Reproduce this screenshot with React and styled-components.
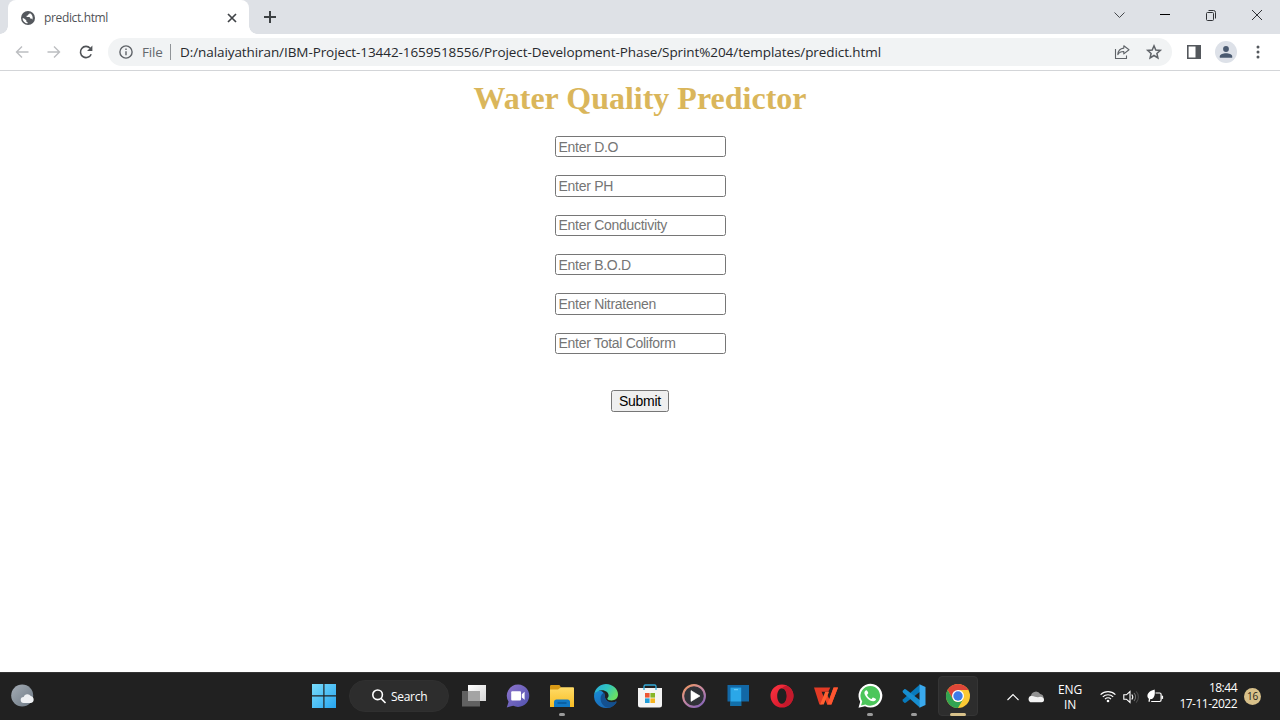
import React from 'react';
import styled, { createGlobalStyle } from 'styled-components';

const Global = createGlobalStyle`
  * { box-sizing: border-box; }
  html, body { margin: 0; padding: 0; }
  body { background: #fff; overflow: hidden; }
  svg { display: block; flex: none; overflow: visible; }
`;

const ui = `'Open Sans', 'Noto Sans', sans-serif`;

const Screen = styled.div`
  width: 1280px;
  height: 720px;
  display: flex;
  flex-direction: column;
  background: #fff;
`;

const TabStrip = styled.header`
  height: 34px;
  flex: none;
  display: flex;
  background: #dee1e6;
  padding-left: 8px;
`;

const Tab = styled.div`
  position: relative;
  width: 241px;
  height: 34px;
  padding: 1px 10px 0 13px;
  display: flex;
  align-items: center;
  background: #fff;
  border-radius: 8px 8px 0 0;
  &::before, &::after {
    content: '';
    position: absolute;
    bottom: 0;
    width: 8px;
    height: 8px;
  }
  &::before { left: -8px; background: radial-gradient(circle at 0 0, transparent 7.5px, #fff 8px); }
  &::after { right: -8px; background: radial-gradient(circle at 100% 0, transparent 7.5px, #fff 8px); }
`;

const TabTitle = styled.span`
  flex: 1;
  margin-left: 9px;
  padding-top: 1px;
  font: 12px/16px ${ui};
  letter-spacing: -0.36px;
  color: #505357;
`;

const NewTab = styled.div`
  width: 42px;
  display: flex;
  align-items: center;
  justify-content: center;
`;

const WindowControls = styled.div`
  margin-left: auto;
  display: flex;
`;

const ControlCell = styled.div`
  width: 46px;
  height: 30px;
  display: flex;
  align-items: center;
  justify-content: center;
`;

const Toolbar = styled.div`
  height: 37px;
  flex: none;
  display: flex;
  align-items: center;
  background: #fff;
  border-bottom: 1px solid #d3d5d8;
  padding: 0 6px 0 6px;
`;

const ToolButton = styled.div`
  width: 32px;
  height: 32px;
  display: flex;
  align-items: center;
  justify-content: center;
`;

const AddressBar = styled.div`
  width: 1064px;
  height: 28px;
  margin: 0 6px;
  padding: 0 2px 0 11px;
  display: flex;
  align-items: center;
  border-radius: 14px;
  background: #f1f3f4;
  font: 13.5px/20px ${ui};
  color: #27292d;
`;

const Scheme = styled.span`
  width: 20px;
  margin-left: 9px;
  letter-spacing: -0.2px;
  color: #64686d;
  white-space: nowrap;
`;

const Divider = styled.span`
  width: 1px;
  height: 16px;
  margin: 0 9px 0 8px;
  background: #909498;
`;

const Url = styled.span`
  flex: 1;
  white-space: nowrap;
  letter-spacing: -0.083px;
`;

const Avatar = styled.div`
  width: 22px;
  height: 22px;
  border-radius: 50%;
  background: #dde1e8;
  display: flex;
  align-items: center;
  justify-content: center;
`;

const Page = styled.main`
  flex: 1;
  display: flex;
  flex-direction: column;
  align-items: center;
`;

const Heading = styled.h1`
  margin: 9px 0 20px;
  font: bold 32px/36px 'Liberation Serif', serif;
  color: #dab65b;
`;

const Form = styled.form`
  display: flex;
  flex-direction: column;
  align-items: center;
  gap: 18px;
`;

const Field = styled.input`
  width: 171px;
  height: 21.33px;
  padding: 1px 3px;
  border: 1px solid #767676;
  border-radius: 2.5px;
  background: #fff;
  font: 14px 'Liberation Sans', sans-serif;
  letter-spacing: -0.28px;
  &::placeholder { color: #757575; }
`;

const Submit = styled.button`
  width: 58px;
  height: 22px;
  margin-top: 18px;
  padding: 0;
  border: 1px solid #767676;
  border-radius: 2.5px;
  background: #efefef;
  color: #000;
  font: 14px/18px 'Liberation Sans', sans-serif;
  letter-spacing: -0.28px;
`;

const Taskbar = styled.footer`
  height: 48px;
  flex: none;
  display: flex;
  background: #212121;
  border-top: 1px solid #343434;
  color: #fff;
  font-family: ${ui};
`;

const Weather = styled.div`
  width: 302px;
  padding: 0 0 1px 11px;
  display: flex;
  align-items: center;
`;

const Slot = styled.div`
  position: relative;
  width: 44px;
  padding-bottom: 1px;
  display: flex;
  align-items: center;
  justify-content: center;
`;

const ActiveSlot = styled(Slot)`
  &::before {
    content: '';
    position: absolute;
    inset: 3px 2px 4px;
    border-radius: 4px;
    background: #2d2d2d;
    border: 1px solid #353535;
  }
  > svg { position: relative; }
`;

const Indicator = styled.span`
  position: absolute;
  bottom: 4px;
  left: 50%;
  width: ${p => (p.$active ? 16 : 6)}px;
  height: 3px;
  transform: translateX(-50%);
  border-radius: 2px;
  background: ${p => (p.$active ? '#d8c18a' : '#9b9b9b')};
`;

const SearchPill = styled.div`
  width: 100px;
  height: 32px;
  margin: 7px 3px 0 3px;
  padding-left: 22px;
  display: flex;
  align-items: center;
  gap: 5px;
  border-radius: 16px;
  background: #2d2d2d;
  border: 1px solid #303030;
  font-size: 12px;
  letter-spacing: -0.3px;
`;

const Tray = styled.div`
  margin-left: auto;
  padding-right: 19px;
  display: flex;
  align-items: center;
`;

const Language = styled.div`
  width: 28px;
  margin: 1px 16px 0 11px;
  text-align: center;
  font-size: 12px;
  line-height: 15px;
  letter-spacing: -0.2px;
`;

const Status = styled.div`
  display: flex;
  align-items: center;
  gap: 7px;
`;

const Clock = styled.div`
  width: 62px;
  margin: 0 7px 2px 11px;
  text-align: right;
  white-space: nowrap;
  font-size: 12px;
  line-height: 16px;
  letter-spacing: -0.5px;
`;

const Badge = styled.div`
  width: 17px;
  height: 17px;
  border-radius: 50%;
  background: #d8c18a;
  color: #2a2618;
  font-size: 10px;
  line-height: 17px;
  text-align: center;
  letter-spacing: -0.3px;
`;

const fields = [
  'Enter D.O',
  'Enter PH',
  'Enter Conductivity',
  'Enter B.O.D',
  'Enter Nitratenen',
  'Enter Total Coliform',
];

const Globe = () => (
  <svg width="14" height="14" viewBox="0 0 14 14">
    <circle cx="7" cy="7" r="7" fill="#54585d" />
    <path d="M8.7 1.9c.1.9-.5 1.2-1.2 1.4-.5.2-.2 1-.8 1.2-.5.2-1.1 0-1.1.5s.2.9-.3 1.1h2.6c.9 0 1.2.6 1.2 1.4h1c.8 0 1.2.8 1.1 1.6a5.5 5.5 0 0 0-2.5-7.2zM1.5 7.2c.2 2.7 2.2 5 5 5.3v-1.4c-.8 0-1.2-.5-1.2-1.1v-.7L2.8 7.2z" fill="#fff" />
  </svg>
);

const Line = ({ w, h, d, color = '#5f6368', sw = 1.5, ...rest }) => (
  <svg width={w} height={h} viewBox={`0 0 ${w} ${h}`} fill="none" stroke={color} strokeWidth={sw} {...rest}>
    <path d={d} />
  </svg>
);

const Reload = () => (
  <svg width="16" height="16" viewBox="0 0 16 16">
    <path d="M13.2 10.2A5.6 5.6 0 1 1 12.2 4.2" fill="none" stroke="#505357" strokeWidth="1.6" />
    <path d="M14.4 1.6v5.3H9.1z" fill="#505357" />
  </svg>
);

const Info = () => (
  <svg width="14" height="14" viewBox="0 0 14 14">
    <circle cx="7" cy="7" r="6.1" fill="none" stroke="#5f6368" strokeWidth="1.4" />
    <path d="M7 6.2v4.1M7 3.4v1.5" stroke="#5f6368" strokeWidth="1.4" />
  </svg>
);

const Share = () => (
  <svg width="16" height="16" viewBox="0 0 16 16" fill="none" stroke="#5f6368" strokeWidth="1.1" strokeLinejoin="round">
    <path d="M1.5 5v9.5h11v-3" />
    <path d="M9.8 1.7 15 5.7 9.8 9.9V7.5C6.7 7.4 5 8.6 3.8 10.6 4.1 6.8 6.4 4.4 9.8 4.1z" />
  </svg>
);

const Star = () => (
  <svg width="16" height="16" viewBox="0 0 16 16">
    <path d="m8 1.8 1.8 4.2 4.5.4-3.4 3 1 4.5L8 11.5l-3.9 2.4 1-4.5-3.4-3 4.5-.4z" fill="none" stroke="#5f6368" strokeWidth="1.5" />
  </svg>
);

const SidePanel = () => (
  <svg width="14" height="14" viewBox="0 0 14 14">
    <path d="M.8 .8h12.4v12.4H.8z" fill="#fff" stroke="#54585d" strokeWidth="1.6" />
    <path d="M8.5 1H13v12H8.5z" fill="#54585d" />
  </svg>
);

const Person = () => (
  <svg width="14" height="14" viewBox="0 0 14 14" fill="#4a5a70">
    <circle cx="7" cy="4" r="2.9" />
    <path d="M.8 12.8v-1.5C.8 9.1 4.3 8.2 7 8.2s6.2.9 6.2 3.1v1.5z" />
  </svg>
);

const Dots = () => (
  <svg width="4" height="14" viewBox="0 0 4 14" fill="#54585d">
    <circle cx="2" cy="2" r="1.5" /><circle cx="2" cy="7" r="1.5" /><circle cx="2" cy="12" r="1.5" />
  </svg>
);

const WeatherIcon = () => (
  <svg width="24" height="24" viewBox="0 0 24 24">
    <defs>
      <linearGradient id="moon" x2="1" y2="1"><stop stopColor="#a5adb5" /><stop offset="1" stopColor="#6c7884" /></linearGradient>
    </defs>
    <circle cx="11.2" cy="11.5" r="11" fill="url(#moon)" />
    <path d="M12.8 19a3 3 0 0 1-.2-6 4.1 4.1 0 0 1 7.2-1 3.6 3.6 0 0 1 .2 7z" fill="#eef0f3" />
  </svg>
);

const Windows = () => (
  <svg width="24" height="24" viewBox="0 0 24 24">
    <defs>
      <linearGradient id="win" x2="1" y2="1"><stop stopColor="#79dcfb" /><stop offset="1" stopColor="#26a4ef" /></linearGradient>
    </defs>
    <path d="M0 0h11.3v11.3H0zM12.5 0H24v11.3H12.5zM0 12.5h11.3V24H0zM12.5 12.5H24V24H12.5z" fill="url(#win)" />
  </svg>
);

const SearchIcon = () => (
  <svg width="14" height="15" viewBox="0 0 14 15" fill="none" stroke="#fff" strokeWidth="1.6">
    <circle cx="5.6" cy="5.8" r="4.8" /><path d="m9 9.4 4.5 4.6" />
  </svg>
);

const TaskView = () => (
  <svg width="24" height="24" viewBox="0 0 24 24">
    <defs><linearGradient id="tv" x2="1" y2="1"><stop stopColor="#fff" /><stop offset="1" stopColor="#d5d5d5" /></linearGradient></defs>
    <path d="M6 1h18v16H6z" fill="url(#tv)" />
    <path d="M0 7h18v15.5H0z" fill="#6c6c6c" fillOpacity=".85" />
    <path d="M6 7h12v10H6z" fill="#a4a4a4" />
  </svg>
);

const Chat = () => (
  <svg width="24" height="24" viewBox="0 0 24 24">
    <defs><linearGradient id="chat" x2="1" y2="1"><stop stopColor="#8e75cc" /><stop offset="1" stopColor="#5052ae" /></linearGradient></defs>
    <path d="M12.2.5a11.2 11.2 0 1 1-5 21.3L.8 23.4l1.8-5.6A11.3 11.3 0 0 1 12.2.5z" fill="url(#chat)" />
    <rect x="5.2" y="7.2" width="9.8" height="9.2" rx="1" fill="#fff" />
    <path d="m15.8 10.2 2.8-2.4v8l-2.8-2.2z" fill="#fff" />
  </svg>
);

const Folder = () => (
  <svg width="24" height="24" viewBox="0 0 24 24">
    <defs><linearGradient id="fold" y2="1" x2="0"><stop stopColor="#ffdc68" /><stop offset="1" stopColor="#f9bd24" /></linearGradient></defs>
    <path d="M0 2.2A1.2 1.2 0 0 1 1.2 1h8.2l1.4 2V8H0z" fill="#d99a16" />
    <path d="M0 5.5h8L11 3.2h12a1 1 0 0 1 1 1V23H0z" fill="url(#fold)" />
    <path d="M4 23v-5a2.5 2.5 0 0 1 2.5-2.5h11A2.5 2.5 0 0 1 20 18v5z" fill="#1279c4" />
    <path d="M7.5 19h9" stroke="#07508e" strokeWidth="1.2" />
  </svg>
);

const Edge = () => (
  <svg width="24" height="24" viewBox="0 0 24 24">
    <defs>
      <linearGradient id="edgeTop" x1="0" x2="1" y2=".5"><stop stopColor="#28a9e2" /><stop offset=".55" stopColor="#31c6bd" /><stop offset="1" stopColor="#68df66" /></linearGradient>
      <linearGradient id="edgeBlue" x2=".6" y2="1"><stop stopColor="#188bd5" /><stop offset="1" stopColor="#1a67b4" /></linearGradient>
    </defs>
    <path d="M.1 10.7A12 12 0 0 0 12 24c4.5 0 8.2-2.3 10.3-5.6.4-.7-.2-1-.8-.7-1.5.8-3.2 1-4.7.8-3.5-.3-6-3-6-6.4 0-3.3-2.6-5.3-6-5.3C2.8 6.8.9 8.6.1 10.7z" fill="url(#edgeBlue)" />
    <path d="M10.2 8.6c-2.2 1-3.6 3.2-3.6 5.8 0 5.3 4 9.4 8.3 9.3 3-.5 5.7-2.3 7.4-5.3.4-.7-.2-1-.8-.7-5 2.3-10.6-1-10.7-5.8z" fill="#14508f" />
    <path d="M.1 10.7C1.1 3.6 6.8 0 12 0c7 0 12 5.1 12 10.2 0 4.1-2.9 6.2-6.4 6.2-2.4 0-4.3-.9-4.3-2 0-.6 1.3-1.2 1.3-3 0-2.6-2.9-5.1-6.6-5.1C4.8 6.3 1.6 8.1.1 10.7z" fill="url(#edgeTop)" />
  </svg>
);

const Store = () => (
  <svg width="24" height="24" viewBox="0 0 24 24">
    <path d="M0 4h24v17a2.5 2.5 0 0 1-2.5 2.5h-19A2.5 2.5 0 0 1 0 21z" fill="#f4f4f4" />
    <path d="M6 6V2.2A1.3 1.3 0 0 1 7.3 1h9.4A1.3 1.3 0 0 1 18 2.2V6" fill="none" stroke="#35aad7" strokeWidth="1.3" />
    <path d="M7 9h4.6v4.6H7z" fill="#ed5634" /><path d="M12.4 9H17v4.6h-4.6z" fill="#87b628" />
    <path d="M7 14.4h4.6V19H7z" fill="#209dd8" /><path d="M12.4 14.4H17V19h-4.6z" fill="#f7b520" />
  </svg>
);

const Media = () => (
  <svg width="24" height="24" viewBox="0 0 24 24">
    <defs><linearGradient id="media" x2=".7" y2="1"><stop stopColor="#ef965b" /><stop offset=".5" stopColor="#c98aa1" /><stop offset="1" stopColor="#8d68b6" /></linearGradient></defs>
    <circle cx="12" cy="12" r="10.9" fill="#303238" stroke="url(#media)" strokeWidth="2.1" />
    <path d="M9 6.6v10.8l9-5.4z" fill="#fff" stroke="#fff" strokeWidth=".6" strokeLinejoin="round" />
  </svg>
);

const Phone = () => (
  <svg width="24" height="24" viewBox="0 0 24 24">
    <path d="M1.5 1H23v16.5H1.5z" fill="#1268a6" />
    <path d="M4.5 3.6h10.7V22H4.5z" fill="#2ba7e8" />
    <path d="M4.5 17.5h10.7V22H4.5z" fill="#126faa" />
    <path d="M8 5.7h4" stroke="#8ad9ff" strokeWidth=".8" />
  </svg>
);

const Opera = () => (
  <svg width="24" height="24" viewBox="0 0 24 24">
    <defs><linearGradient id="opera" x2="1" y2="1"><stop stopColor="#ff3542" /><stop offset="1" stopColor="#c90f25" /></linearGradient></defs>
    <path fillRule="evenodd" d="M12 .5a11.5 11.5 0 1 0 0 23 11.5 11.5 0 0 0 0-23zm0 3.7c2.7 0 4.8 3.5 4.8 7.8s-2.1 7.8-4.8 7.8S7.2 16.3 7.2 12 9.3 4.2 12 4.2z" fill="url(#opera)" />
    <path d="M12 4.2C13.9 2.2 16 1.8 18 2.2a11.5 11.5 0 0 1 0 19.6c-2 .4-4.1-.1-6-2 2.7 0 4.8-3.5 4.8-7.8s-2.1-7.8-4.8-7.8z" fill="#c31a2c" />
  </svg>
);

const Wps = () => (
  <svg width="24" height="24" viewBox="0 0 24 24">
    <path d="M0 3.5h16.3l-2 4.2H7.6l2.6 6.2-2.5 6.7H5.4z" fill="#e23a25" />
    <path d="M19.6 3.5H24l-6.6 17.1h-4.2L11 14.7l1.8-5.1 2.6 5.8z" fill="#f04527" />
    <path d="M11.2 7.7h3.9L9.7 20.6H6.1z" fill="#ff6132" />
    <path d="M19.6 3.5H24l-6.6 17.1h-4.2z" fill="#ff5630" />
  </svg>
);

const WhatsApp = () => (
  <svg width="24" height="24" viewBox="0 0 24 24">
    <path d="M.5 23.8 2.2 17.8A11.9 11.9 0 1 1 7 22.3z" fill="#fff" />
    <path d="m3 21.4 1.2-4A9.8 9.8 0 1 1 7.5 20.4z" fill="#4cc65b" />
    <path d="M8.6 6.2c-.9-.2-2.1 1-2.2 2.5-.2 3 5.2 8.9 9 8.6 1.6-.1 2.7-1.2 2.6-2.2 0-.4-2.7-1.9-3.1-1.7-.5.2-1.1 1.7-1.6 1.6-1.3-.3-3.9-2.7-4.2-4.1-.1-.5 1.2-1.2 1.2-1.8 0-.5-1.1-2.8-1.7-2.9z" fill="#fff" />
  </svg>
);

const Code = () => (
  <svg width="24" height="24" viewBox="0 0 24 24">
    <path d="M17.8.4 1.1 15.3.5 17.1l2.1 1.8 1.1-.1L18 7.8z" fill="#087abc" />
    <path d="M17.8 23.6 1.1 8.7.5 6.9l2.1-1.8 1.1.1L18 16.2z" fill="#178ed0" />
    <path d="m17.5.2 6 2.7v18.2l-6 2.7z" fill="#39a9ed" />
  </svg>
);

const Chrome = () => (
  <svg width="24" height="24" viewBox="0 0 24 24">
    <circle cx="12" cy="12" r="12" fill="#fbc934" />
    <path d="M1.6 6a12 12 0 0 1 20.8 0H12v6l-5.2 3z" fill="#df4638" />
    <path d="M1.6 6 6.8 15a6 6 0 0 0 10.4 0L12 24A12 12 0 0 1 1.6 6z" fill="#32a452" />
    <circle cx="12" cy="12" r="6" fill="#fff" /><circle cx="12" cy="12" r="4.7" fill="#3e7ce8" />
  </svg>
);

const Cloud = () => (
  <svg width="17" height="12" viewBox="0 0 17 12">
    <path d="M3.7 10.8A3.3 3.3 0 0 1 3 4.5a5 5 0 0 1 9.2-1.4A4 4 0 0 1 13 10.8z" fill="#929292" />
    <path d="M3.6 11.3A3.2 3.2 0 0 1 3 5C5.6 4.4 8 6.4 10 6.2c2-1 5.8-.6 6 2.3a2.6 2.6 0 0 1-2.4 2.8z" fill="#f3f3f3" />
  </svg>
);

const Wifi = () => (
  <svg width="16" height="13" viewBox="0 0 16 13" fill="none" stroke="#fff" strokeWidth="1.2">
    <path d="M.6 4.6a10.5 10.5 0 0 1 14.8 0M2.8 6.9a7.4 7.4 0 0 1 10.4 0M5 9.1a4.3 4.3 0 0 1 6 0" />
    <circle cx="8" cy="11" r="1.3" fill="#fff" stroke="none" />
  </svg>
);

const Speaker = () => (
  <svg width="17" height="14" viewBox="0 0 17 14" fill="none" stroke="#fff" strokeWidth="1.1">
    <path d="M.8 4.8h2.6L7 1.5v11L3.4 9.2H.8zM8.8 4.5a4 4 0 0 1 0 5" />
    <path d="M11 3a6 6 0 0 1 0 8" stroke="#777" /><path d="M13.1 1.4a8 8 0 0 1 0 11.2" stroke="#4b4b4b" />
  </svg>
);

const Battery = () => (
  <svg width="17" height="15" viewBox="0 0 17 15">
    <path d="M8.5 4h4.2a1.4 1.4 0 0 1 1.4 1.4v5.7a1.4 1.4 0 0 1-1.4 1.4H4.2" fill="none" stroke="#fff" strokeWidth="1.2" />
    <path d="M14.5 6.7h1.6v3.2h-1.6z" fill="#fff" />
    <path d="M7.6.5C3.9 1.5.4 3.6.4 7c0 1.2.6 2.2 1.5 2.8l-.5 2.8 1.2.3.7-2.8C7.4 10.4 8.4 5.4 7.6.5z" fill="#fff" />
  </svg>
);

const apps = [
  { Icon: TaskView },
  { Icon: Chat },
  { Icon: Folder, running: true },
  { Icon: Edge },
  { Icon: Store },
  { Icon: Media },
  { Icon: Phone },
  { Icon: Opera },
  { Icon: Wps },
  { Icon: WhatsApp, running: true },
  { Icon: Code, running: true },
];

export default function App() {
  return (
    <Screen>
      <Global />
      <TabStrip>
        <Tab>
          <Globe />
          <TabTitle>predict.html</TabTitle>
          <Line w={14} h={14} d="m3 3 8 8m0-8-8 8" color="#404347" sw={1.7} />
        </Tab>
        <NewTab><Line w={14} h={14} d="M7 1v12M1 7h12" color="#3c4043" sw={2} /></NewTab>
        <WindowControls>
          <ControlCell><Line w={10} h={8} d="m.5 1.5 5 5 5-5" color="#44474b" sw={1} /></ControlCell>
          <ControlCell><Line w={10} h={2} d="M0 .5h10" color="#000" sw={1} /></ControlCell>
          <ControlCell>
            <svg width="10" height="11" viewBox="0 0 10 11" fill="none" stroke="#303236" strokeWidth="1">
              <rect x=".5" y="2.5" width="7" height="8" rx="1" /><path d="M2.5.5h5a2 2 0 0 1 2 2v6" />
            </svg>
          </ControlCell>
          <ControlCell><Line w={10} h={10} d="m0 0 10 10M10 0 0 10" color="#303236" sw={1} /></ControlCell>
        </WindowControls>
      </TabStrip>
      <Toolbar>
        <ToolButton><Line w={14} h={14} d="M13.5 7H1.5M7 1.5 1.5 7 7 12.5" color="#bcbec1" sw={1.4} /></ToolButton>
        <ToolButton><Line w={14} h={14} d="M.5 7h12M7 1.5 12.5 7 7 12.5" color="#bcbec1" sw={1.4} /></ToolButton>
        <ToolButton><Reload /></ToolButton>
        <AddressBar>
          <Info />
          <Scheme>File</Scheme>
          <Divider />
          <Url>D:/nalaiyathiran/IBM-Project-13442-1659518556/Project-Development-Phase/Sprint%204/templates/predict.html</Url>
          <ToolButton><Share /></ToolButton>
          <ToolButton><Star /></ToolButton>
        </AddressBar>
        <ToolButton><SidePanel /></ToolButton>
        <ToolButton><Avatar><Person /></Avatar></ToolButton>
        <ToolButton><Dots /></ToolButton>
      </Toolbar>
      <Page>
        <Heading>Water Quality Predictor</Heading>
        <Form>
          {fields.map(f => <Field key={f} placeholder={f} />)}
          <Submit type="button">Submit</Submit>
        </Form>
      </Page>
      <Taskbar>
        <Weather><WeatherIcon /></Weather>
        <Slot><Windows /></Slot>
        <SearchPill><SearchIcon />Search</SearchPill>
        {apps.map(({ Icon, running }, i) => (
          <Slot key={i}><Icon />{running && <Indicator />}</Slot>
        ))}
        <ActiveSlot><Chrome /><Indicator $active /></ActiveSlot>
        <Tray>
          <Line w={12} h={8} d="m.5 7 5.5-5.5L11.5 7" color="#fff" sw={1.1} style={{ marginRight: 9 }} />
          <Cloud />
          <Language>ENG<br />IN</Language>
          <Status><Wifi /><Speaker /><Battery /></Status>
          <Clock>18:44<br />17-11-2022</Clock>
          <Badge>16</Badge>
        </Tray>
      </Taskbar>
    </Screen>
  );
}
